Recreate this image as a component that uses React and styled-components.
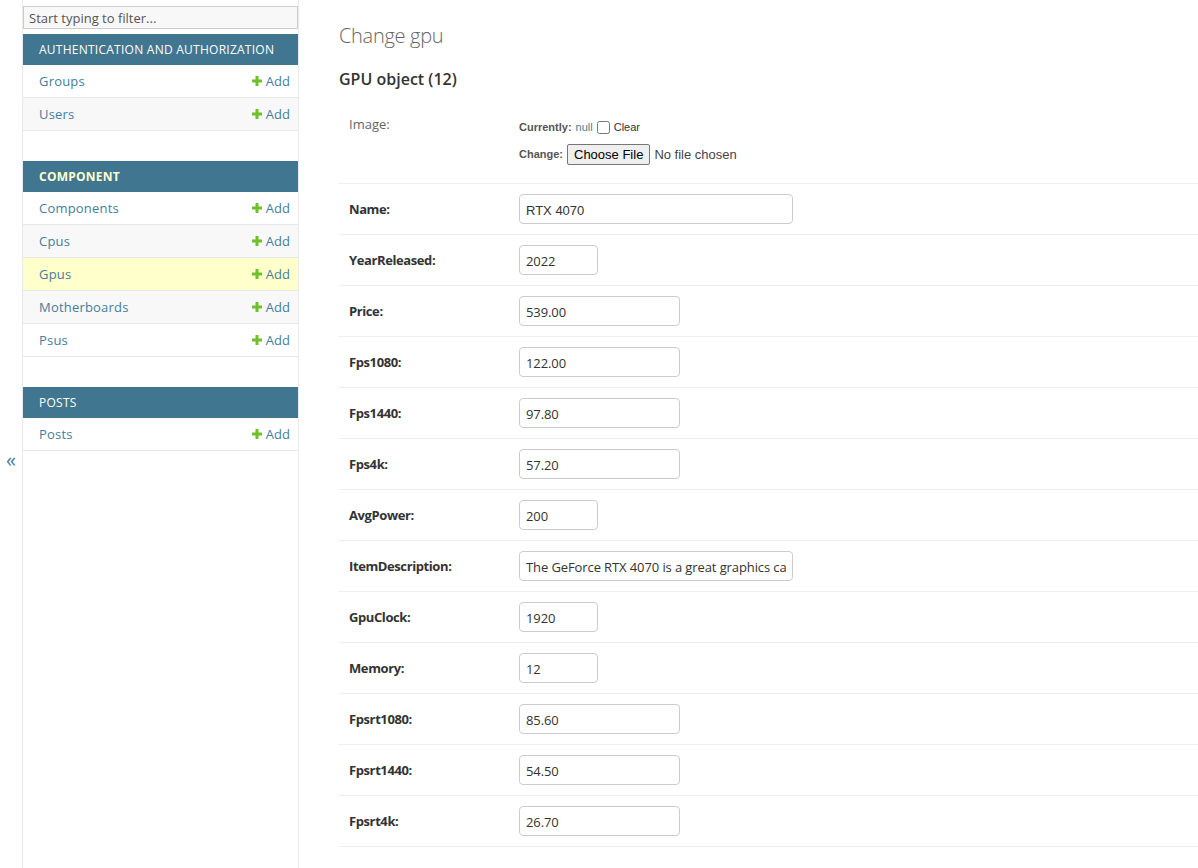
import React from 'react';
import styled, { createGlobalStyle } from 'styled-components';

const GlobalStyle = createGlobalStyle`
  html, body {
    margin: 0;
    padding: 0;
    background: #fff;
  }
  body {
    font-family: "Open Sans", "Noto Sans", sans-serif;
    color: #333;
    font-size: 14px;
  }
`;

const apps = [
  {
    name: 'Authentication and Authorization',
    models: ['Groups', 'Users'],
  },
  {
    name: 'Component',
    current: true,
    models: ['Components', 'Cpus', 'Gpus', 'Motherboards', 'Psus'],
    selected: 'Gpus',
  },
  {
    name: 'Posts',
    models: ['Posts'],
  },
];

const fields = [
  { label: 'Name', value: 'RTX 4070', width: 274, mono: true },
  { label: 'YearReleased', value: '2022', width: 79 },
  { label: 'Price', value: '539.00', width: 161 },
  { label: 'Fps1080', value: '122.00', width: 161 },
  { label: 'Fps1440', value: '97.80', width: 161 },
  { label: 'Fps4k', value: '57.20', width: 161 },
  { label: 'AvgPower', value: '200', width: 79 },
  { label: 'ItemDescription', value: 'The GeForce RTX 4070 is a great graphics card', width: 274 },
  { label: 'GpuClock', value: '1920', width: 79 },
  { label: 'Memory', value: '12', width: 79 },
  { label: 'Fpsrt1080', value: '85.60', width: 161 },
  { label: 'Fpsrt1440', value: '54.50', width: 161 },
  { label: 'Fpsrt4k', value: '26.70', width: 161 },
];

const Page = styled.div`
  display: flex;
  min-height: 868px;
`;

const Toggle = styled.div`
  flex: 0 0 22px;
  border-right: 1px solid #eaeaea;
  display: flex;
  justify-content: center;
  padding-top: 448px;
  color: #447e9b;
  font-size: 20px;
  line-height: 24px;
`;

const Nav = styled.nav`
  flex: 0 0 275px;
  border-right: 1px solid #eaeaea;
`;

const Filter = styled.input`
  display: block;
  box-sizing: border-box;
  width: 275px;
  height: 23px;
  margin: 6px 0 5px;
  padding: 2px 5px;
  border: 1px solid #ccc;
  background: #f8f8f8;
  font-family: inherit;
  font-size: 13px;
  color: #333;
  outline: none;
  &::placeholder {
    color: #555;
  }
`;

const Module = styled.div`
  margin-bottom: 30px;
`;

const Caption = styled.div`
  background: #417690;
  color: ${(p) => (p.$current ? '#ffc' : '#fff')};
  font-weight: ${(p) => (p.$current ? 700 : 400)};
  font-size: 12px;
  line-height: 15px;
  letter-spacing: 0.25px;
  white-space: nowrap;
  text-transform: uppercase;
  padding: 8px 16px;
`;

const ModelRow = styled.div`
  display: flex;
  justify-content: space-between;
  align-items: center;
  padding: 8px 8px 8px 16px;
  line-height: 16px;
  font-size: 13px;
  border-bottom: 1px solid #e8e8e8;
  background: ${(p) => (p.$selected ? '#ffc' : p.$alt ? '#f8f8f8' : '#fff')};
`;

const ModelLink = styled.a`
  color: #447e9b;
  text-decoration: none;
  letter-spacing: 0.2px;
`;

const AddLink = styled.a`
  display: flex;
  align-items: center;
  gap: 4px;
  color: #447e9b;
  text-decoration: none;
`;

const Main = styled.main`
  flex: 1;
  padding: 22px 0 20px 40px;
`;

const Title = styled.h1`
  margin: 0 0 18px;
  font-size: 20px;
  line-height: 28px;
  font-weight: 300;
  letter-spacing: -0.3px;
  color: #666;
`;

const SubTitle = styled.h2`
  margin: 0 0 9px;
  font-size: 16px;
  line-height: 22px;
  font-weight: 600;
  color: #333;
`;

const FormRow = styled.div`
  display: flex;
  align-items: flex-start;
  padding: 10px;
  border-bottom: 1px solid #eee;
`;

const Label = styled.label`
  flex: 0 0 160px;
  padding: 7px 10px 0 0;
  font-size: 13px;
  line-height: 16px;
  letter-spacing: ${(p) => (p.$required ? '-0.4px' : '0')};
  font-weight: ${(p) => (p.$required ? 700 : 400)};
  color: ${(p) => (p.$required ? '#333' : '#666')};
`;

const TextInput = styled.input`
  box-sizing: border-box;
  height: 30px;
  padding: 6px 6px 4px;
  border: 1px solid #ccc;
  border-radius: 4px;
  font-family: ${(p) => (p.$mono ? '"Liberation Sans", Arial, sans-serif' : 'inherit')};
  font-size: 13px;
  letter-spacing: ${(p) => (p.$mono ? '0' : '-0.1px')};
  color: #333;
  background: #fff;
  outline: none;
`;

const Upload = styled.div`
  display: flex;
  flex-direction: column;
  gap: 10px;
  padding: 12px 0 8px;
  font-family: "Liberation Sans", Arial, sans-serif;
  font-size: 11px;
  line-height: 13px;
  color: #333;
`;

const UploadLine = styled.div`
  display: flex;
  align-items: center;
  gap: 4px;
`;

const UploadKey = styled.span`
  font-weight: 700;
  color: #555;
`;

const NullLink = styled.a`
  color: #447e9b;
  text-decoration: none;
`;

const Check = styled.input`
  width: 13px;
  height: 13px;
  margin: 0;
`;

const FileButton = styled.button`
  height: 21px;
  padding: 1px 6px;
  border: 1px solid #767676;
  border-radius: 2px;
  background: #efefef;
  font-family: "Liberation Sans", Arial, sans-serif;
  font-size: 13px;
  color: #000;
`;

const NoFile = styled.span`
  font-family: "Liberation Sans", Arial, sans-serif;
  font-size: 13px;
  color: #444;
`;

function PlusIcon() {
  return (
    <svg width="10" height="10" viewBox="0 0 10 10" aria-hidden="true">
      <path d="M3.5 0h3v3.5H10v3H6.5V10h-3V6.5H0v-3h3.5z" fill="#70bf2b" />
    </svg>
  );
}

export default function App() {
  return (
    <>
      <GlobalStyle />
      <Page>
        <Toggle>«</Toggle>
        <Nav>
          <Filter placeholder="Start typing to filter..." />
          {apps.map((app) => (
            <Module key={app.name}>
              <Caption $current={app.current}>{app.name}</Caption>
              {app.models.map((m, i) => (
                <ModelRow key={m} $alt={i % 2 === 1} $selected={app.selected === m}>
                  <ModelLink href="#">{m}</ModelLink>
                  <AddLink href="#">
                    <PlusIcon />
                    Add
                  </AddLink>
                </ModelRow>
              ))}
            </Module>
          ))}
        </Nav>
        <Main>
          <Title>Change gpu</Title>
          <SubTitle>GPU object (12)</SubTitle>
          <FormRow>
            <Label>Image:</Label>
            <Upload>
              <UploadLine>
                <UploadKey>Currently:</UploadKey>
                <NullLink href="#">null</NullLink>
                <Check type="checkbox" />
                <span>Clear</span>
              </UploadLine>
              <UploadLine>
                <UploadKey>Change:</UploadKey>
                <FileButton type="button">Choose File</FileButton>
                <NoFile>No file chosen</NoFile>
              </UploadLine>
            </Upload>
          </FormRow>
          {fields.map((f) => (
            <FormRow key={f.label}>
              <Label $required>{f.label}:</Label>
              <TextInput
                $mono={f.mono}
                defaultValue={f.value}
                style={{ width: f.width }}
              />
            </FormRow>
          ))}
        </Main>
      </Page>
    </>
  );
}
